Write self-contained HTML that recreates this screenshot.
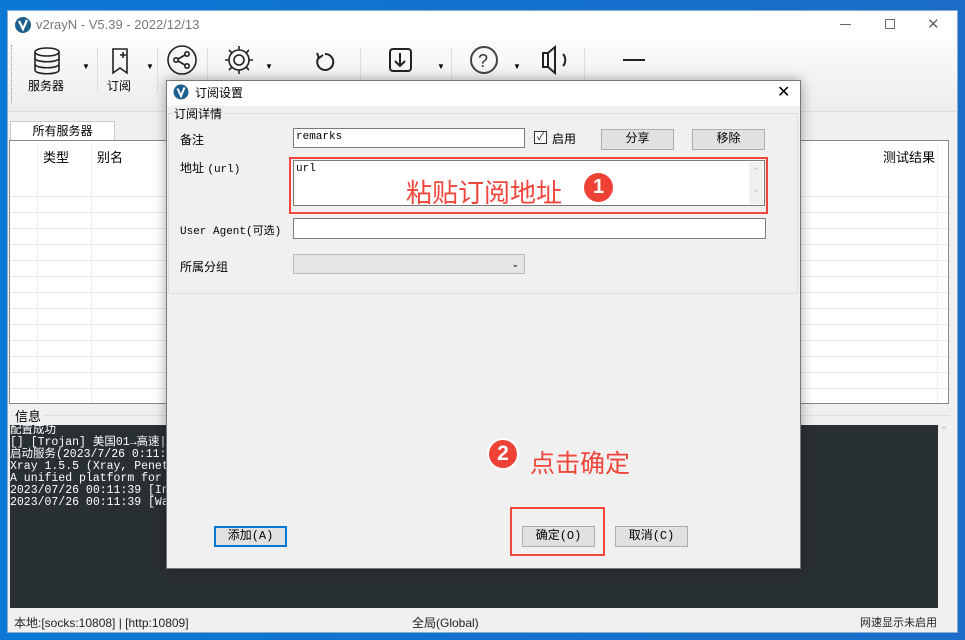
<!DOCTYPE html>
<html><head><meta charset="utf-8"><style>
*{box-sizing:border-box;margin:0;padding:0}
body{width:965px;height:640px;overflow:hidden;background:linear-gradient(90deg,#0a78d4,#1a6cc8);font-family:"Liberation Sans","Noto Sans CJK SC",sans-serif;font-size:12px;color:#000;position:relative}
.a{position:absolute}
.mono{font-family:"Liberation Mono","Noto Sans CJK SC",monospace}
.btn{position:absolute;background:#e1e1e1;border:1px solid #adadad;text-align:center;font-size:12px;line-height:19px;font-family:"Liberation Mono","Noto Sans CJK SC",monospace}
.inp{position:absolute;background:#fff;border:1px solid #7a7a7a}
</style></head><body>
<div class="a" style="left:7px;top:10px;width:951px;height:623px;background:#f0f0f0;border:1px solid #8aaed0"></div>
<div class="a" style="left:8px;top:11px;width:949px;height:29px;background:#fff"></div>
<svg class="a" style="left:14px;top:16px" width="18" height="18"><circle cx="9" cy="9" r="8" fill="#1d5f8f"/><path d="M5 5 L9 13 L13 4" stroke="#fff" stroke-width="2.2" fill="none"/></svg>
<div class="a" style="left:36px;top:17px;font-size:13px;color:#777">v2rayN - V5.39 - 2022/12/13</div>
<div class="a" style="left:840px;top:24px;width:11px;height:1px;background:#666"></div>
<div class="a" style="left:885px;top:19px;width:10px;height:10px;border:1px solid #666"></div>
<div class="a" style="left:927px;top:15px;font-size:15px;color:#666">✕</div>
<div class="a" style="left:8px;top:40px;width:949px;height:72px;background:linear-gradient(#fbfbfb,#ededed);border-bottom:1px solid #ddd"></div>
<div class="a" style="left:11px;top:45px;height:58px;border-left:1px dotted #999"></div>
<svg class="a" style="left:20px;top:42px" width="300" height="40" fill="none" stroke="#222" stroke-width="1.6">
<ellipse cx="27" cy="10" rx="12" ry="4"/><path d="M15 10v18c0 5 24 5 24 0V10M15 16c0 5 24 5 24 0M15 22c0 5 24 5 24 0"/>
<path d="M93 7h14v24l-7-5-7 5z"/><path d="M103 10v6M100 13h6"/>
<circle cx="162" cy="18" r="14"/><circle cx="156" cy="18" r="2.2"/><circle cx="167" cy="12" r="2.2"/><circle cx="167" cy="24" r="2.2"/><path d="M158 17l7-4M158 19l7 4"/>
<circle cx="219" cy="18" r="5"/><path d="M219 4v4M219 28v4M205 18h4M229 18h4M209 8l3 3M226 25l3 3M229 8l-3 3M212 25l-3 3"/><circle cx="219" cy="18" r="10"/>
</svg>
<svg class="a" style="left:300px;top:42px" width="360" height="40" fill="none" stroke="#222" stroke-width="2">
<path d="M25 12a8 8 0 1 1-6 3M17 11l2 5 4-3"/>
<rect x="90" y="7" width="21" height="22" rx="3"/><path d="M100 11v13M95 19l5 5 5-5"/>
<circle cx="184" cy="18" r="13" stroke="#444"/><text x="178" y="25" font-size="18" fill="#333" stroke="none" font-family="Liberation Sans">?</text>
<path d="M243 11h5l7-6v26l-7-6h-5zM248 11v14M263 12c3 3 3 9 0 12"/>
<path d="M323 18h22"/>
</svg>
<div class="a" style="left:82px;top:62px;font-size:8px">▼</div>
<div class="a" style="left:146px;top:62px;font-size:8px">▼</div>
<div class="a" style="left:265px;top:62px;font-size:8px">▼</div>
<div class="a" style="left:437px;top:62px;font-size:8px">▼</div>
<div class="a" style="left:513px;top:62px;font-size:8px">▼</div>
<div class="a" style="left:28px;top:77px;font-size:12px">服务器</div>
<div class="a" style="left:107px;top:77px;font-size:12px">订阅</div>
<div class="a" style="left:97px;top:48px;height:44px;border-left:1px solid #ddd"></div>
<div class="a" style="left:157px;top:48px;height:44px;border-left:1px solid #ddd"></div>
<div class="a" style="left:207px;top:48px;height:44px;border-left:1px solid #ddd"></div>
<div class="a" style="left:360px;top:48px;height:44px;border-left:1px solid #ddd"></div>
<div class="a" style="left:451px;top:48px;height:44px;border-left:1px solid #ddd"></div>
<div class="a" style="left:584px;top:48px;height:44px;border-left:1px solid #ddd"></div>
<div class="a" style="left:10px;top:121px;width:105px;height:20px;background:#fff;border:1px solid #ccc;border-bottom:none;text-align:center;line-height:19px">所有服务器</div>
<div class="a" style="left:9px;top:140px;width:940px;height:264px;background:#fff;border:1px solid #888;
background-image:repeating-linear-gradient(#fff 0 15px,#e8e8e8 15px 16px);background-position:0 40px;background-clip:content-box"></div>
<div class="a" style="left:10px;top:141px;width:938px;height:40px;background:#fff"></div>
<div class="a" style="left:37px;top:142px;height:261px;border-left:1px solid #eee"></div>
<div class="a" style="left:91px;top:142px;height:261px;border-left:1px solid #eee"></div>
<div class="a" style="left:937px;top:142px;height:261px;border-left:1px solid #eee"></div>
<div class="a" style="left:43px;top:147px;font-size:13px">类型</div>
<div class="a" style="left:97px;top:147px;font-size:13px">别名</div>
<div class="a" style="left:883px;top:147px;font-size:13px">测试结果</div>
<div class="a" style="left:10px;top:415px;width:940px;height:1px;background:#ddd"></div>
<div class="a" style="left:13px;top:406px;font-size:13px;background:#f0f0f0;padding:0 2px">信息</div>
<div class="a" style="left:10px;top:425px;width:928px;height:183px;background:#293034"></div>
<div class="a" style="left:938px;top:425px;width:12px;height:183px;background:#f0f0f0;color:#aaa;font-size:9px;text-align:center">⌃</div>
<div class="a mono" style="left:10px;top:425px;width:156px;height:90px;color:#fff;font-size:11.5px;line-height:12px;overflow:hidden;white-space:nowrap">配置成功<br>[] [Trojan] 美国01→高速|解<br>启动服务(2023/7/26 0:11:39<br>Xray 1.5.5 (Xray, Penetrat<br>A unified platform for ant<br>2023/07/26 00:11:39 [Info]<br>2023/07/26 00:11:39 [Warni</div>
<div class="a" style="left:14px;top:614px;font-size:12px;color:#222">本地:[socks:10808] | [http:10809]</div>
<div class="a" style="left:412px;top:614px;font-size:12px;color:#222">全局(Global)</div>
<div class="a" style="left:860px;top:614px;font-size:11px;color:#222">网速显示未启用</div>
<div class="a" style="left:166px;top:80px;width:635px;height:489px;background:#f0f0f0;border:1px solid #777;box-shadow:0 0 12px rgba(0,0,0,.35)"></div>
<div class="a" style="left:167px;top:81px;width:633px;height:25px;background:#fff"></div>
<svg class="a" style="left:173px;top:84px" width="16" height="16"><circle cx="8" cy="8" r="7.5" fill="#1d5f8f"/><path d="M4.5 4.5 L8 12 L11.5 3.5" stroke="#fff" stroke-width="2" fill="none"/></svg>
<div class="a" style="left:195px;top:84px;font-size:12px">订阅设置</div>
<div class="a" style="left:777px;top:82px;font-size:16px">✕</div>
<div class="a" style="left:168px;top:113px;width:630px;height:181px;border:1px solid #ddd"></div>
<div class="a" style="left:172px;top:105px;font-size:12px;background:#f0f0f0;padding:0 2px">订阅详情</div>
<div class="a" style="left:180px;top:131px">备注</div>
<div class="inp mono" style="left:293px;top:128px;width:232px;height:20px;font-size:11px;padding:2px 2px">remarks</div>
<div class="a" style="left:534px;top:131px;width:13px;height:13px;border:1px solid #333;background:#fff;font-size:10px;line-height:11px;text-align:center">✓</div>
<div class="a" style="left:552px;top:130px">启用</div>
<div class="btn" style="left:601px;top:129px;width:73px;height:21px">分享</div>
<div class="btn" style="left:692px;top:129px;width:73px;height:21px">移除</div>
<div class="a" style="left:180px;top:159px;font-size:12px">地址 <span class="mono" style="font-size:11px">(url)</span></div>
<div class="inp mono" style="left:293px;top:160px;width:472px;height:46px;font-size:11px;padding:2px 2px">url</div>
<div class="a" style="left:749px;top:162px;width:14px;height:42px;background:#f0f0f0;color:#bbb;font-size:9px;text-align:center;line-height:18px">⌃<br>⌄</div>
<div class="a" style="left:289px;top:157px;width:479px;height:57px;border:2px solid #f0463c"></div>
<div class="a" style="left:406px;top:173px;font-size:26px;color:#f0463c">粘贴订阅地址</div>
<div class="a" style="left:584px;top:173px;width:29px;height:29px;border-radius:50%;background:#ee4236;color:#fff;font-size:20px;font-weight:bold;text-align:center;line-height:29px">1</div>
<div class="a mono" style="left:180px;top:222px;font-size:11px">User Agent(可选)</div>
<div class="inp" style="left:293px;top:218px;width:473px;height:21px"></div>
<div class="a" style="left:180px;top:258px">所属分组</div>
<div class="a" style="left:293px;top:254px;width:232px;height:20px;background:#e5e5e5;border:1px solid #bbb;font-size:9px;text-align:right;padding-right:5px;line-height:18px">⌄</div>
<div class="a" style="left:487px;top:438px;width:32px;height:32px;border-radius:50%;background:#ee4236;border:2px solid #fff;color:#fff;font-size:21px;font-weight:bold;text-align:center;line-height:28px">2</div>
<div class="a" style="left:530px;top:444px;font-size:25px;color:#f0463c">点击确定</div>
<div class="btn" style="left:214px;top:526px;width:73px;height:21px;border:2px solid #0078d7;line-height:17px">添加(A)</div>
<div class="a" style="left:510px;top:507px;width:95px;height:49px;border:2px solid #f0463c"></div>
<div class="btn" style="left:522px;top:526px;width:73px;height:21px">确定(O)</div>
<div class="btn" style="left:615px;top:526px;width:73px;height:21px">取消(C)</div>
</body></html>
